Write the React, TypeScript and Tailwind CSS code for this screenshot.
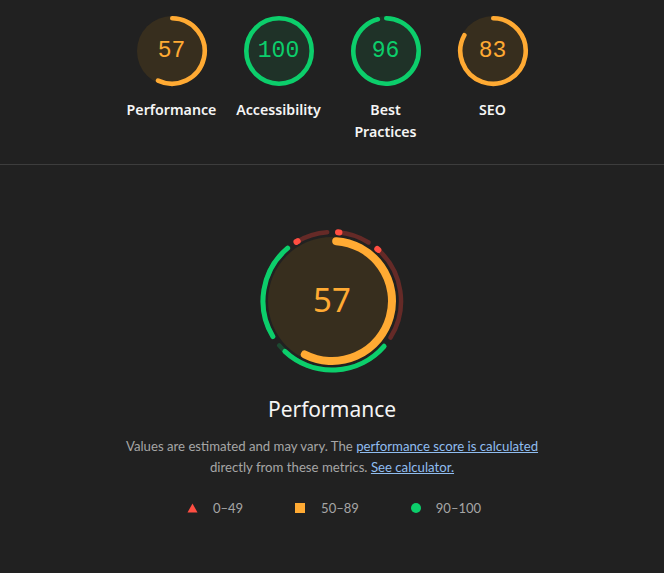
import React from 'react';

const ORANGE = '#ffaa33';
const GREEN = '#0cce6b';
const RED = '#ff4e42';

function pt(cx: number, cy: number, r: number, a: number): [number, number] {
  const rad = (a * Math.PI) / 180;
  return [cx + r * Math.sin(rad), cy - r * Math.cos(rad)];
}

function arc(cx: number, cy: number, r: number, a1: number, a2: number): string {
  const [x1, y1] = pt(cx, cy, r, a1);
  const [x2, y2] = pt(cx, cy, r, a2);
  const large = a2 - a1 > 180 ? 1 : 0;
  return `M ${x1.toFixed(3)} ${y1.toFixed(3)} A ${r} ${r} 0 ${large} 1 ${x2.toFixed(3)} ${y2.toFixed(3)}`;
}

type GaugeProps = { score: number; color: string; fill: string; label: React.ReactNode };

function SmallGauge({ score, color, fill, label }: GaugeProps) {
  return (
    <div className="flex w-[107px] flex-col items-center">
      <div className="relative h-[72px] w-[72px]">
        <svg width="72" height="72" viewBox="0 0 72 72">
          <circle cx="36" cy="36" r="35" fill={fill} />
          {score >= 100 ? (
            <circle cx="36" cy="36" r="32.7" fill="none" stroke={color} strokeWidth="4.6" />
          ) : (
            <path
              d={arc(36, 36, 32.7, 0.5, score * 3.6)}
              fill="none"
              stroke={color}
              strokeWidth="4.6"
              strokeLinecap="round"
            />
          )}
        </svg>
        <div
          className="absolute inset-0 flex items-center justify-center font-['Liberation_Mono',monospace] text-[23px] leading-none"
          style={{ color }}
        >
          {score}
        </div>
      </div>
      <div className="mt-[12px] text-center text-[14.2px] font-semibold leading-[22px] text-[#f5f5f5]">{label}</div>
    </div>
  );
}

type Seg = { a1: number; a2: number; score: number; color: string; bg: string };

const DIM_RED = '#652a27';
const DIM_GREEN = '#1c4a32';

const segs: Seg[] = [
  { a1: 0, a2: 36, score: 0.01, color: RED, bg: DIM_RED },
  { a1: 36, a2: 126, score: 0.01, color: RED, bg: DIM_RED },
  { a1: 126, a2: 234, score: 0.93, color: GREEN, bg: DIM_GREEN },
  { a1: 234, a2: 324, score: 1, color: GREEN, bg: DIM_GREEN },
  { a1: 324, a2: 360, score: 0.01, color: RED, bg: DIM_RED },
];

function BigGauge() {
  const c = 75;
  return (
    <div className="relative h-[150px] w-[150px]">
      <svg width="150" height="150" viewBox="0 0 150 150">
        <circle cx={c} cy={c} r="64" fill="#372e1e" />
        {segs.map((s, i) => {
          const start = s.a1 + 5;
          const end = s.a2 - 4;
          const dot = s.score < 0.1;
          const colEnd = dot ? start + 1.2 : start + s.score * (end - start);
          return (
            <g key={i}>
              <path d={arc(c, c, 69, start, end)} fill="none" stroke={s.bg} strokeWidth="4.5" strokeLinecap="round" />
              <path
                d={arc(c, c, 69, start, colEnd)}
                fill="none"
                stroke={s.color}
                strokeWidth={dot ? 6 : 5}
                strokeLinecap="round"
              />
            </g>
          );
        })}
        <path d={arc(c, c, 60, 4, 207)} fill="none" stroke={ORANGE} strokeWidth="8" strokeLinecap="round" />
      </svg>
      <div className="absolute inset-0 flex items-center justify-center text-[33px] leading-none text-[#ffaa33]">
        <span className="-mt-[3px]">57</span>
      </div>
    </div>
  );
}

export default function App() {
  return (
    <div className="min-h-screen w-full bg-[#212121] font-['Noto_Sans',sans-serif]">
      <div className="flex h-[165px] justify-center border-b border-[#3d3d3d] pt-[15px]">
        <SmallGauge score={57} color={ORANGE} fill="#372e1e" label="Performance" />
        <SmallGauge score={100} color={GREEN} fill="#1f3228" label="Accessibility" />
        <SmallGauge
          score={96}
          color={GREEN}
          fill="#1f3228"
          label={
            <>
              Best
              <br />
              Practices
            </>
          }
        />
        <SmallGauge score={83} color={ORANGE} fill="#372e1e" label="SEO" />
      </div>
      <div className="flex flex-col items-center pt-[61px]">
        <BigGauge />
        <div className="mt-[19px] text-[21px] leading-[28px] text-[#f5f5f5]">Performance</div>
        <p className="mt-[13px] text-center font-['Lato',sans-serif] text-[13.2px] leading-[21px] text-[#a6a6a6]">
          Values are estimated and may vary. The{' '}
          <a href="#" className="text-[#90bdf0] underline">
            performance score is calculated
          </a>
          <br />
          directly from these metrics.{' '}
          <a href="#" className="text-[#90bdf0] underline">
            See calculator.
          </a>
        </p>
        <div className="mt-[20px] ml-[4px] flex items-center gap-[52px] font-['Lato',sans-serif] text-[13px] leading-[20px] text-[#a6a6a6]">
          <div className="flex items-center gap-[15px]">
            <svg width="11" height="10" viewBox="0 0 11 10">
              <polygon points="5.5,0.5 10.5,9.5 0.5,9.5" fill={RED} />
            </svg>
            <span>0–49</span>
          </div>
          <div className="flex items-center gap-[16px]">
            <div className="h-[10px] w-[10px] bg-[#ffaa33]" />
            <span>50–89</span>
          </div>
          <div className="flex items-center gap-[15px]">
            <div className="h-[10px] w-[10px] rounded-full bg-[#0cce6b]" />
            <span>90–100</span>
          </div>
        </div>
      </div>
    </div>
  );
}
